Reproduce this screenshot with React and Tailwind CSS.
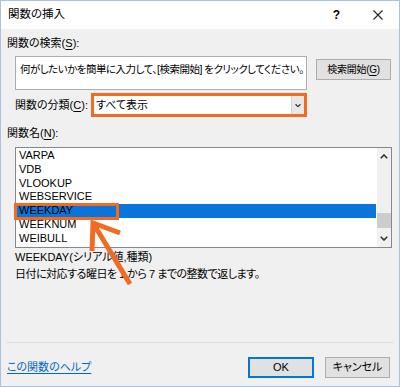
const functionNames = ["VARPA", "VDB", "VLOOKUP", "WEBSERVICE", "WEEKDAY", "WEEKNUM", "WEIBULL"];

function Chevron({ up = false, className = "" }) {
  return (
    <svg width="8" height="5" viewBox="0 0 8 5" className={className}>
      <path
        d={up ? "M0.8 4.2 L4 1 L7.2 4.2" : "M0.8 0.8 L4 4 L7.2 0.8"}
        fill="none"
        stroke="#333"
        strokeWidth="1.6"
      />
    </svg>
  );
}

function Mnemonic({ label, letter }) {
  return (
    <span>
      {label}(<span className="underline underline-offset-2">{letter}</span>)
    </span>
  );
}

export default function App() {
  return (
    <div className="relative flex h-[387px] w-[400px] flex-col border border-[#a9c3df] bg-[#f0f0f0] font-['Liberation_Sans','Noto_Sans_CJK_JP',sans-serif] text-[11px] text-black [font-feature-settings:'palt']">
      {/* title bar */}
      <div className="flex h-[28px] items-center bg-white pl-[7px]">
        <span className="text-[11.5px]">関数の挿入</span>
        <span className="ml-auto text-[12px] font-bold">?</span>
        <svg width="10" height="10" viewBox="0 0 10 10" className="ml-[33px] mr-[16px]">
          <path d="M0.5 0.5 L9.5 9.5 M9.5 0.5 L0.5 9.5" stroke="#222" strokeWidth="1.1" />
        </svg>
      </div>

      <div className="flex flex-1 flex-col px-[6px]">
        <p className="mt-[7px] leading-[14px]">
          <Mnemonic label="関数の検索" letter="S" />:
        </p>

        <div className="ml-[8px] mt-[6px] flex items-start gap-[9px]">
          <div className="h-[34px] w-[292px] whitespace-nowrap border border-[#abadb3] bg-white pl-[4px] pt-[5px] text-[10.5px] leading-[14px] tracking-[-0.5px]">
            何がしたいかを簡単に入力して、[検索開始] をクリックしてください。
          </div>
          <button className="mt-[3px] flex h-[21px] w-[75px] items-center justify-center whitespace-nowrap border border-[#adadad] bg-[#e1e1e1] text-[10px] tracking-[-0.3px]">
            <Mnemonic label="検索開始" letter="G" />
          </button>
        </div>

        <div className="ml-[8px] mt-[3px] flex items-center">
          <span className="w-[76px] leading-[14px]">
            <Mnemonic label="関数の分類" letter="C" />:
          </span>
          <div className="flex h-[24px] w-[216px] items-stretch border-[3px] border-[#f26b22] bg-white">
            <span className="flex flex-1 items-center pl-[2px]">すべて表示</span>
            <span className="flex w-[13px] items-center justify-center border-l border-[#d4d4d4] bg-[#e8e8e8]">
              <Chevron className="scale-75" />
            </span>
          </div>
        </div>

        <p className="mt-[9px] leading-[14px]">
          <Mnemonic label="関数名" letter="N" />:
        </p>

        <div className="ml-[8px] mt-[7px] flex h-[101px] w-[377px] border border-[#828790] bg-white">
          <ul className="flex-1 px-[1px] pt-[1px]">
            {functionNames.map((name) => (
              <li
                key={name}
                className={
                  name === "WEEKDAY"
                    ? "h-[13.75px] bg-[#0a74da] pl-[2px] leading-[13.75px]"
                    : "h-[13.75px] pl-[2px] leading-[13.75px]"
                }
              >
                {name}
              </li>
            ))}
          </ul>
          <div className="flex w-[14px] flex-col bg-[#f0f0f0]">
            <div className="flex h-[17px] items-center justify-center">
              <Chevron up />
            </div>
            <div className="flex-1">
              <div className="mt-[48px] h-[15px] bg-[#cdcdcd]" />
            </div>
            <div className="flex h-[17px] items-center justify-center">
              <Chevron />
            </div>
          </div>
        </div>

        <div className="ml-[8px] mt-[1px] leading-[17px]">
          <p>WEEKDAY(シリアル値,種類)</p>
          <p className="tracking-[-0.5px]">日付に対応する曜日を 1 から 7 までの整数で返します。</p>
        </div>

        <div className="mt-auto h-px bg-[#dcdcdc]" />

        <div className="flex items-center pb-[8px] pt-[14px]">
          <a className="text-[#0066cc] underline underline-offset-2">この関数のヘルプ</a>
          <div className="ml-auto mr-[3px] flex gap-[11px]">
            <button className="h-[21px] w-[66px] border border-[#0078d7] bg-[#e1e1e1] shadow-[inset_0_0_0_1px_#0078d7]">
              OK
            </button>
            <button className="h-[21px] w-[65px] border border-[#adadad] bg-[#e1e1e1]">キャンセル</button>
          </div>
        </div>
      </div>

      {/* callout overlays */}
      <div className="pointer-events-none absolute left-[13px] top-[202px] h-[17px] w-[105px] border-[3px] border-[#f26b22]" />
      <svg
        width="400"
        height="387"
        viewBox="0 0 400 387"
        className="pointer-events-none absolute left-[-1px] top-[-1px]"
      >
        <path
          d="M120 233 L93 223 L92 251 M93 223 L130 284"
          fill="none"
          stroke="#f26b22"
          strokeWidth="5"
          strokeLinejoin="miter"
        />
      </svg>
    </div>
  );
}
